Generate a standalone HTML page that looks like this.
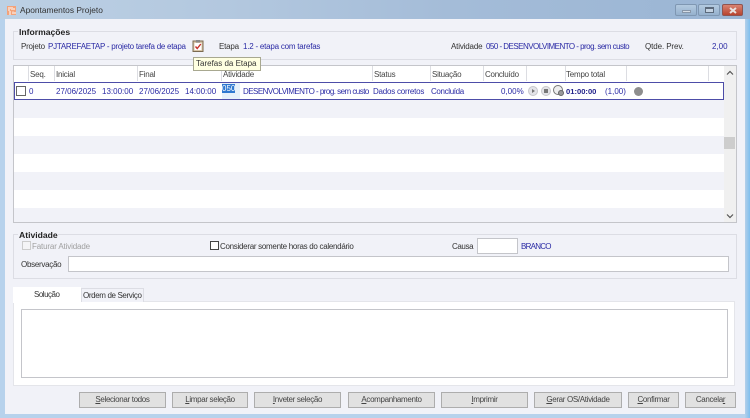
<!DOCTYPE html>
<html><head><meta charset="utf-8">
<style>
html,body{margin:0;padding:0;width:750px;height:418px;overflow:hidden}
body{position:relative;background:#b7d2ec;font:8px "Liberation Sans",sans-serif;color:#333}
div{position:absolute;box-sizing:border-box}
#w{left:0;top:0;width:750px;height:418px;filter:blur(.3px);overflow:hidden}
.t{white-space:nowrap;line-height:11px;height:11px;letter-spacing:-.22px}
.n{letter-spacing:0}
.c{letter-spacing:-.53px}
.b{color:#2b2ba5}
.h{color:#444}
.sep{top:66px;width:1px;height:15px;background:#dcdde2}
.btn{top:392px;height:16px;background:#e1e1e1;border:1px solid #adadad;text-align:center;line-height:14px;color:#444;font-size:8px;letter-spacing:-.34px;white-space:nowrap}
.box{border:1px solid #dcdde4;background:#f1f2f8}
u{text-decoration:underline}
</style></head><body>
<div id="w">
<div style="left:0;top:0;width:750px;height:19px;background:linear-gradient(90deg,#bcd0e4 0,#b3c8df 30%,#a4bcd8 60%,#9ab5d4 100%)"></div>
<div style="left:745px;top:19px;width:5px;height:399px;background:linear-gradient(90deg,#b4cfe9,#7ebfee)"></div>
<div style="left:0;top:19px;width:5px;height:399px;background:#b7d2ec"></div>
<div style="left:5px;top:19px;width:740px;height:395px;background:#f1f2f8"></div>
<svg style="position:absolute;left:7px;top:6px" width="9" height="9" viewBox="0 0 9 9"><rect width="9" height="9" fill="#f3a27a"/><path d="M1 2H4M1 4H3M5 1V4M7 2V4M2 6H4M2 8H4M6 5.5L6 8M8 6V8" stroke="#fff" stroke-width="1"/></svg>
<div class="t" style="left:20px;top:5px;font-size:8.4px;letter-spacing:0;color:#333">Apontamentos Projeto</div>

<div style="left:675px;top:4px;width:22px;height:12px;background:linear-gradient(#b4cae0,#96b1cd);border:1px solid #7f97b2;border-radius:2px"></div>
<div style="left:682px;top:10px;width:9px;height:3px;background:#d5dde6;border:1px solid #8896a8"></div>
<div style="left:698px;top:4px;width:22px;height:12px;background:linear-gradient(#b4cae0,#96b1cd);border:1px solid #7f97b2;border-radius:2px"></div>
<div style="left:705px;top:7px;width:9px;height:6px;border:1px solid #5c6a7c;border-top-width:2px;background:#c3d2e2"></div>
<div style="left:722px;top:4px;width:21px;height:12px;background:linear-gradient(#d98372,#b8442f);border:1px solid #8f5450;border-radius:2px"></div>
<svg style="position:absolute;left:729px;top:7px" width="8" height="7"><path d="M1 1L7 6M7 1L1 6" stroke="#e8e2e0" stroke-width="2"/></svg>

<div class="box" style="left:13px;top:31px;width:724px;height:29px"></div>
<div style="left:18px;top:27px;width:52px;height:9px;background:#f1f2f8"></div>
<div class="t" style="left:19px;top:27px;font-weight:bold;color:#222;font-size:8.6px;letter-spacing:0">Informações</div>
<div class="t" style="left:21px;top:41px">Projeto</div>
<div class="t b" style="left:48px;top:41px;letter-spacing:-.26px">PJTAREFAETAP - projeto tarefa de etapa</div>
<svg style="position:absolute;left:192px;top:39px" width="12" height="13" viewBox="0 0 12 13"><rect x="1" y="2" width="10" height="10.5" fill="#d8c6a8" stroke="#7b6a50"/><rect x="2.5" y="4" width="7" height="7" fill="#fff"/><rect x="4" y="1" width="4" height="2.5" fill="#8a8a8a"/><path d="M3.5 7.5L5.2 9.5L8.8 5" fill="none" stroke="#c8302a" stroke-width="1.4"/></svg>
<div class="t" style="left:219px;top:41px">Etapa</div>
<div class="t b" style="left:243px;top:41px">1.2 - etapa com tarefas</div>
<div class="t" style="left:451px;top:41px;letter-spacing:-.17px">Atividade</div>
<div class="t b c" style="left:486px;top:41px">050 - DESENVOLVIMENTO - prog. sem custo</div>
<div class="t" style="left:645px;top:41px;letter-spacing:-.1px">Qtde. Prev.</div>
<div class="t b n" style="left:712px;top:41px">2,00</div>

<!-- grid -->
<div style="left:13px;top:65px;width:724px;height:158px;background:#f1f2f8;border:1px solid #c4c5ca"></div>
<div style="left:14px;top:66px;width:710px;height:16px;background:#fff"></div>
<div class="sep" style="left:28px"></div><div class="sep" style="left:54px"></div><div class="sep" style="left:137px"></div><div class="sep" style="left:221px"></div><div class="sep" style="left:372px"></div><div class="sep" style="left:430px"></div><div class="sep" style="left:483px"></div><div class="sep" style="left:526px"></div><div class="sep" style="left:565px"></div><div class="sep" style="left:626px"></div><div class="sep" style="left:708px"></div>
<div class="t h" style="left:30px;top:69px">Seq.</div>
<div class="t h" style="left:56px;top:69px">Inicial</div>
<div class="t h" style="left:139px;top:69px">Final</div>
<div class="t h" style="left:223px;top:69px">Atividade</div>
<div class="t h" style="left:374px;top:69px">Status</div>
<div class="t h" style="left:432px;top:69px">Situação</div>
<div class="t h" style="left:485px;top:69px;letter-spacing:-.25px">Concluído</div>
<div class="t h" style="left:566px;top:69px">Tempo total</div>

<div style="left:14px;top:118px;width:710px;height:18px;background:#fff"></div>
<div style="left:14px;top:154px;width:710px;height:18px;background:#fff"></div>
<div style="left:14px;top:190px;width:710px;height:18px;background:#fff"></div>

<div style="left:14px;top:82px;width:710px;height:18px;background:#fff;border:1px solid #4d4da8"></div>
<div style="left:16px;top:86px;width:10px;height:10px;background:#fff;border:1px solid #666"></div>
<div class="t b" style="left:29px;top:86px">0</div>
<div class="t b n" style="left:56px;top:86px">27/06/2025</div>
<div class="t b n" style="left:102px;top:86px">13:00:00</div>
<div class="t b n" style="left:139px;top:86px">27/06/2025</div>
<div class="t b n" style="left:185px;top:86px">14:00:00</div>
<div style="left:222px;top:83px;width:18px;height:16px;background:#e6f0fa"></div>
<div class="t n" style="left:222px;top:84px;width:13px;height:9px;line-height:9px;background:#2f78d0;color:#fff">050</div>
<div class="t b c" style="left:243px;top:86px">DESENVOLVIMENTO - prog. sem custo</div>
<div class="t b" style="left:373px;top:86px">Dados corretos</div>
<div class="t b" style="left:431px;top:86px;letter-spacing:-.35px">Concluída</div>
<div class="t b n" style="left:501px;top:86px">0,00%</div>
<div style="left:528px;top:86px;width:10px;height:10px;border-radius:50%;background:#e4e4e8;border:1px solid #c8c8cc"></div>
<div style="left:532px;top:89px;width:0;height:0;border-left:3px solid #777;border-top:2px solid transparent;border-bottom:2px solid transparent"></div>
<div style="left:541px;top:86px;width:10px;height:10px;border-radius:50%;background:#e4e4e8;border:1px solid #c8c8cc"></div>
<div style="left:544px;top:89px;width:4px;height:4px;background:#777"></div>
<div style="left:553px;top:85px;width:10px;height:10px;border-radius:50%;background:#eee;border:1px solid #777"></div>
<div style="left:558px;top:90px;width:6px;height:6px;border-radius:50%;background:#9a9a9a;border:1px solid #666"></div>
<div class="t" style="left:566px;top:86px;color:#22228a;font-weight:bold;font-size:7.6px;letter-spacing:0">01:00:00</div>
<div class="t b n" style="left:605px;top:86px">(1,00)</div>
<div style="left:634px;top:87px;width:9px;height:9px;border-radius:50%;background:#8e8e8e"></div>

<!-- scrollbar -->
<div style="left:724px;top:66px;width:12px;height:156px;background:#f0f0f0"></div>
<div style="left:724px;top:137px;width:11px;height:12px;background:#cdcdcd"></div>
<svg style="position:absolute;left:726px;top:70px" width="8" height="6"><path d="M1 4.5L4 1.5L7 4.5" fill="none" stroke="#555" stroke-width="1.2"/></svg>
<svg style="position:absolute;left:726px;top:213px" width="8" height="6"><path d="M1 1.5L4 4.5L7 1.5" fill="none" stroke="#555" stroke-width="1.2"/></svg>

<!-- atividade -->
<div class="box" style="left:13px;top:234px;width:724px;height:45px"></div>
<div style="left:18px;top:230px;width:40px;height:9px;background:#f1f2f8"></div>
<div class="t" style="left:19px;top:230px;font-weight:bold;color:#222;font-size:8.6px;letter-spacing:0">Atividade</div>
<div style="left:22px;top:241px;width:9px;height:9px;background:#f4f4f6;border:1px solid #ccc"></div>
<div class="t" style="left:32px;top:241px;color:#a0a0a0;letter-spacing:-.15px">Faturar Atividade</div>
<div style="left:210px;top:241px;width:9px;height:9px;background:#fff;border:1px solid #444"></div>
<div class="t" style="left:220px;top:241px;letter-spacing:-.29px">Considerar somente horas do calendário</div>
<div class="t" style="left:452px;top:241px;letter-spacing:-.4px">Causa</div>
<div style="left:477px;top:238px;width:41px;height:16px;background:#fff;border:1px solid #c4c5ca"></div>
<div class="t b" style="left:521px;top:241px;letter-spacing:-.75px">BRANCO</div>
<div class="t" style="left:21px;top:259px;letter-spacing:-.28px">Observação</div>
<div style="left:68px;top:256px;width:661px;height:16px;background:#fff;border:1px solid #c4c5ca"></div>

<!-- tabs -->
<div style="left:13px;top:301px;width:722px;height:85px;background:#fff;border:1px solid #e4e5ea"></div>
<div style="left:13px;top:287px;width:68px;height:16px;background:#fff"></div>
<div class="t" style="left:34px;top:289px;letter-spacing:-.5px">Solução</div>
<div style="left:81px;top:288px;width:63px;height:14px;background:#f1f2f8;border:1px solid #dcdde4;border-bottom:none"></div>
<div class="t" style="left:83px;top:290px;letter-spacing:-.37px">Ordem de Serviço</div>
<div style="left:21px;top:309px;width:707px;height:69px;background:#fff;border:1px solid #c4c5ca"></div>

<!-- buttons -->
<div class="btn" style="left:79px;width:87px"><u>S</u>elecionar todos</div>
<div class="btn" style="left:172px;width:76px"><u>L</u>impar seleção</div>
<div class="btn" style="left:254px;width:87px"><u>I</u>nveter seleção</div>
<div class="btn" style="left:348px;width:87px"><u>A</u>companhamento</div>
<div class="btn" style="left:441px;width:87px"><u>I</u>mprimir</div>
<div class="btn" style="left:534px;width:88px"><u>G</u>erar OS/Atividade</div>
<div class="btn" style="left:628px;width:51px"><u>C</u>onfirmar</div>
<div class="btn" style="left:685px;width:51px">Cancela<u>r</u></div>

<!-- tooltip -->
<div class="t n" style="left:193px;top:57px;width:68px;height:14px;line-height:12px;background:#ffffe1;border:1px solid #a8a890;padding-left:2px;color:#333;font-size:8px">Tarefas da Etapa</div>
</div>
</body></html>
